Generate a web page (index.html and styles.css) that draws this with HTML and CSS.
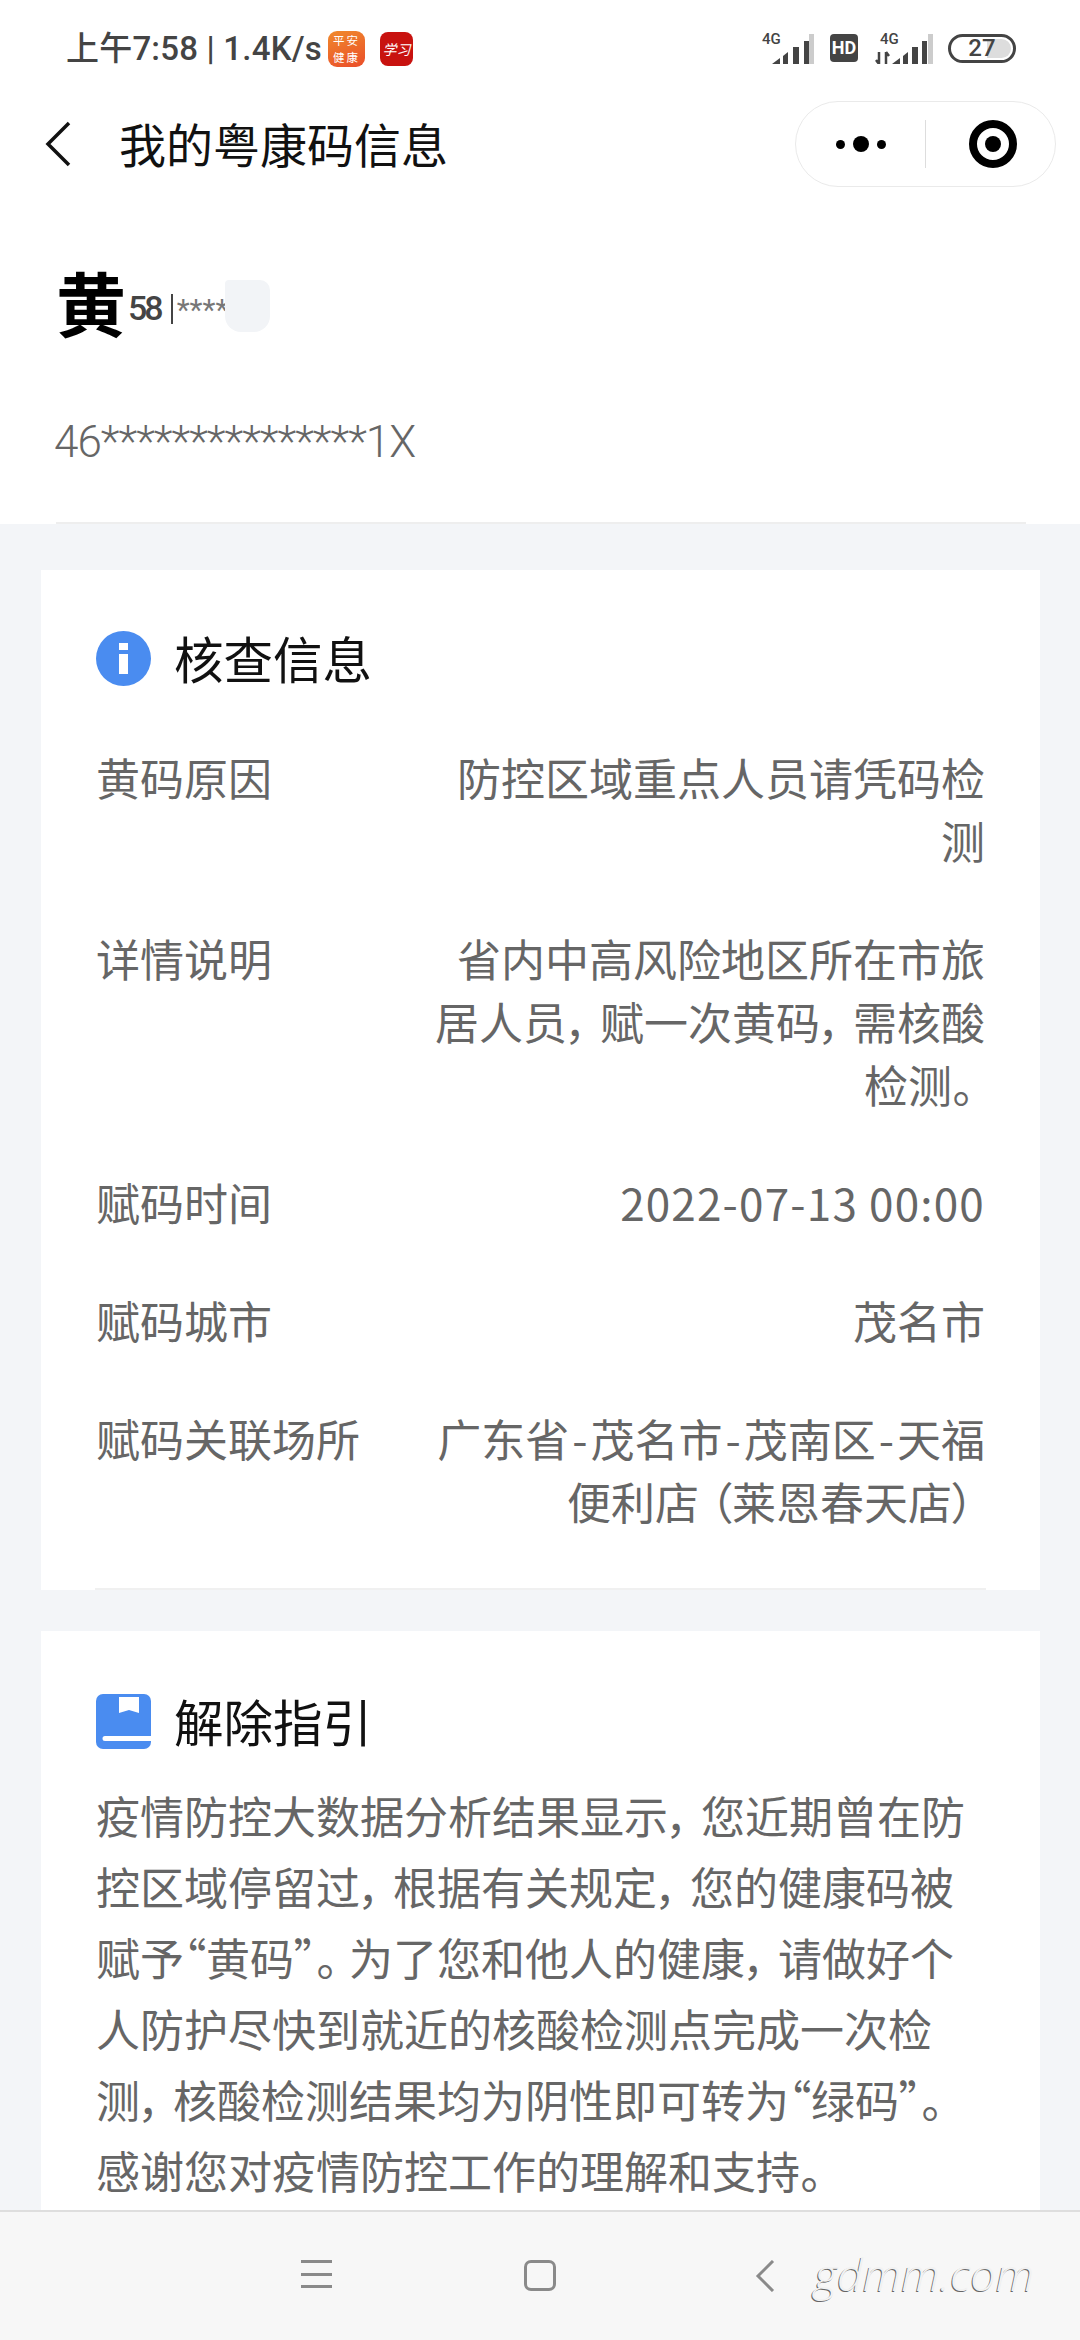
FILE: index.html
```html
<!DOCTYPE html>
<html lang="zh-CN">
<head>
    <meta charset="UTF-8">
    <meta name="viewport" content="width=device-width, initial-scale=1.0">
    <title>我的粤康码信息</title>
    <link rel="stylesheet" href="styles.css">
</head>
<body>
    <div class="status-bar">
        <div class="status-left">
            <span class="status-time">上午7:58 | 1.4K/s</span>
            <span class="app-badge app-badge-orange">平安<br>健康</span>
            <span class="app-badge app-badge-red">学习</span>
        </div>
        <div class="status-right">
            <span class="signal">
                <span class="signal-label">4G</span>
                <svg width="42" height="30" viewBox="0 0 42 30">
                    <path d="M0 30 L8 24 V30 Z M11 22 L16 18 V30 H11 Z M21 13 H27 V30 H21 Z M32 7 H37 V30 H32 Z" fill="#444"/>
                    <rect x="37" y="0" width="5" height="30" fill="#ccc"/>
                </svg>
            </span>
            <span class="hd-badge">HD</span>
            <span class="signal signal-data">
                <span class="signal-label">4G</span>
                <svg width="58" height="30" viewBox="0 0 58 30">
                    <path d="M4 18 V30 M1 26 L4 30 M11 30 V18 M11 18 L14 22" stroke="#444" stroke-width="2.500" fill="none"/>
                    <path d="M17 30 L25 24 V30 Z M28 22 L33 18 V30 H28 Z M37 13 H43 V30 H37 Z M47 7 H52 V30 H47 Z" fill="#444"/>
                    <rect x="53" y="0" width="5" height="30" fill="#ccc"/>
                </svg>
            </span>
            <span class="battery"><span class="battery-level"></span><span class="battery-num">27</span></span>
        </div>
    </div>

    <div class="app-bar">
        <svg class="back-icon" width="26" height="46" viewBox="0 0 26 46">
            <path d="M24 2 L3 23 L24 44" fill="none" stroke="#111" stroke-width="3.500"/>
        </svg>
        <h1>我的粤康码信息</h1>
        <div class="capsule">
            <span class="capsule-dots"><i></i><i class="big"></i><i></i></span>
            <span class="capsule-line"></span>
            <span class="capsule-target"></span>
        </div>
    </div>

    <main class="content">
        <section class="person">
            <div class="person-name">
                <span class="name-first">黄</span>
                <span class="name-digits">58</span>
                <span class="name-bar"></span>
                <span class="name-stars">****</span>
                <span class="name-blot"></span>
            </div>
            <div class="person-id">46***************1X</div>
        </section>

        <section class="card card-check">
            <div class="card-title">
                <svg class="card-icon" viewBox="0 0 55 55">
                    <circle cx="27.500" cy="27.500" r="27.500" fill="#4a8cf0"/>
                    <rect x="23" y="12" width="9" height="7" fill="#fff"/>
                    <rect x="23" y="23" width="9" height="20" fill="#fff"/>
                </svg>
                <h2>核查信息</h2>
            </div>
            <div class="row">
                <div class="row-label">黄码原因</div>
                <div class="row-value">防控区域重点人员请凭码检<br>测</div>
            </div>
            <div class="row">
                <div class="row-label">详情说明</div>
                <div class="row-value">省内中高风险地区所在市旅<br>居人员<span class="punct">，</span>赋一次黄码<span class="punct">，</span>需核酸<br>检测<span class="punct">。</span></div>
            </div>
            <div class="row">
                <div class="row-label">赋码时间</div>
                <div class="row-value row-date">2022-07-13 00:00</div>
            </div>
            <div class="row">
                <div class="row-label">赋码城市</div>
                <div class="row-value">茂名市</div>
            </div>
            <div class="row">
                <div class="row-label">赋码关联场所</div>
                <div class="row-value">广东省<span class="hyphen">-</span>茂名市<span class="hyphen">-</span>茂南区<span class="hyphen">-</span>天福<br>便利店<span class="punct-open">（</span>莱恩春天店<span class="punct">）</span></div>
            </div>
        </section>

        <section class="card card-guide">
            <div class="card-title">
                <svg class="card-icon" viewBox="0 0 55 55">
                    <path d="M7 0 H48 A7 7 0 0 1 55 7 V48 A7 7 0 0 1 48 55 H7 A7 7 0 0 1 0 48 V7 A7 7 0 0 1 7 0 Z" fill="#4a8cf0"/>
                    <path d="M23 3 H43 V19 L33 16 L23 19 Z" fill="#fff"/>
                    <path d="M9 42 H55 V47 H9 A2.500 2.500 0 0 1 9 42 Z" fill="#fff"/>
                </svg>
                <h2>解除指引</h2>
            </div>
            <p class="guide-text">疫情防控大数据分析结果显示<span class="punct">，</span>您近期曾在防<br>控区域停留过<span class="punct">，</span>根据有关规定<span class="punct">，</span>您的健康码被<br>赋予“黄码”<span class="punct">。</span>为了您和他人的健康<span class="punct">，</span>请做好个<br>人防护尽快到就近的核酸检测点完成一次检<br>测<span class="punct">，</span>核酸检测结果均为阴性即可转为“绿码”<span class="punct">。</span><br>感谢您对疫情防控工作的理解和支持<span class="punct">。</span></p>
        </section>
    </main>

    <nav class="nav-bar">
        <span class="nav-menu"><i></i><i></i><i></i></span>
        <span class="nav-home"></span>
        <svg class="nav-back" width="20" height="32" viewBox="0 0 20 32">
            <path d="M18 1 L3 16 L18 31" fill="none" stroke="#8a8a8a" stroke-width="3"/>
        </svg>
        <span class="watermark">gdmm.com</span>
    </nav>
</body>
</html>
```

FILE: styles.css
```css
* {
    box-sizing: border-box;
}
body {
    margin: 0;
    width: 1080px;
    height: 2340px;
    overflow: hidden;
    display: flex;
    flex-direction: column;
    background-color: #fff;
    font-family: "Noto Sans CJK SC", "Noto Sans", sans-serif;
    font-feature-settings: "palt";
}

/* status bar */
.status-bar {
    height: 98px;
    padding: 30px 64px 0 66px;
    display: flex;
    justify-content: space-between;
    align-items: flex-start;
}
.status-left {
    display: flex;
    align-items: center;
    height: 38px;
}
.status-time {
    width: 262px;
    font-size: 33px;
    line-height: 38px;
    letter-spacing: 0.2px;
    font-weight: 500;
    color: #444;
    white-space: nowrap;
    font-family: Roboto, "Noto Sans CJK SC", sans-serif;
}
.app-badge {
    display: flex;
    align-items: center;
    justify-content: center;
    text-align: center;
    color: #fff;
    white-space: nowrap;
}
.app-badge-orange {
    width: 37px;
    height: 36px;
    border-radius: 9px;
    font-size: 11.500px;
    line-height: 17px;
    letter-spacing: 2px;
    background: linear-gradient(160deg, #f08a2c, #ea4d2a);
}
.app-badge-red {
    width: 33px;
    height: 34px;
    margin-left: 15px;
    border-radius: 8px;
    font-size: 14px;
    font-style: italic;
    background-color: #c8120f;
}
.status-right {
    display: flex;
    align-items: flex-start;
    padding-top: 4px;
}
.signal {
    position: relative;
    width: 52px;
    height: 30px;
    display: flex;
    justify-content: flex-end;
}
.signal-data {
    width: 58px;
    margin-left: 17px;
}
.signal-label {
    position: absolute;
    left: 0;
    top: -3px;
    font-size: 15px;
    line-height: 16px;
    font-weight: 500;
    color: #444;
    font-family: Roboto, sans-serif;
}
.signal-data .signal-label {
    left: 5px;
}
.hd-badge {
    width: 28px;
    height: 28px;
    margin-left: 16px;
    border-radius: 4px;
    background-color: #444;
    color: #fff;
    font-size: 18px;
    line-height: 28px;
    font-weight: 700;
    text-align: center;
    font-family: Roboto, sans-serif;
}
.battery {
    position: relative;
    width: 68px;
    height: 29px;
    margin-left: 15px;
    border: 3px solid #444;
    border-radius: 15px;
    text-align: center;
}
.battery-level {
    position: absolute;
    right: 2px;
    top: 2px;
    width: 24px;
    height: 19px;
    border-radius: 0 10px 10px 0;
    background-color: #ddd;
}
.battery-num {
    position: relative;
    font-size: 24px;
    line-height: 23px;
    display: block;
    font-weight: 500;
    color: #444;
    font-family: Roboto, sans-serif;
}

/* app bar */
.app-bar {
    height: 92px;
    padding: 0 24px 0 45px;
    display: flex;
    align-items: center;
    flex-shrink: 0;
}
.back-icon {
    flex-shrink: 0;
}
.app-bar h1 {
    flex: 1;
    margin: -2px 0 0 48px;
    font-size: 47px;
    line-height: 60px;
    font-weight: 400;
    color: #111;
}
.capsule {
    width: 261px;
    height: 86px;
    border: 1px solid #eaeaea;
    border-radius: 43px;
    display: flex;
    align-items: center;
}
.capsule-dots {
    width: 129px;
    display: flex;
    align-items: center;
    justify-content: center;
    gap: 8px;
}
.capsule-dots i {
    width: 9px;
    height: 9px;
    border-radius: 50%;
    background-color: #000;
}
.capsule-dots i.big {
    width: 16px;
    height: 16px;
}
.capsule-line {
    width: 1px;
    height: 48px;
    background-color: #ddd;
}
.capsule-target {
    position: relative;
    width: 48px;
    height: 48px;
    margin-left: 43px;
    border: 8px solid #000;
    border-radius: 50%;
}
.capsule-target::after {
    content: "";
    position: absolute;
    left: 8px;
    top: 8px;
    width: 16px;
    height: 16px;
    border-radius: 50%;
    background-color: #000;
}

/* scrolling content */
.content {
    flex: 1;
    min-height: 0;
    overflow: hidden;
    background-color: #f3f5f8;
}
.person {
    height: 334px;
    padding: 70px 54px 0 56px;
    background-color: #fff;
}
.person-name {
    position: relative;
    height: 84px;
    display: flex;
    align-items: center;
}
.name-first {
    font-size: 70px;
    line-height: 84px;
    font-weight: 700;
    color: #000;
}
.name-digits {
    margin: 12px 0 0 2px;
    font-size: 34px;
    line-height: 40px;
    letter-spacing: -3px;
    font-weight: 500;
    color: #444;
    font-family: Roboto, sans-serif;
}
.name-bar {
    width: 2px;
    height: 30px;
    margin: 14px 0 0 10px;
    background-color: #444;
}
.name-stars {
    margin: 16px 0 0 4px;
    font-size: 30px;
    line-height: 30px;
    color: #777;
    white-space: nowrap;
    font-family: Roboto, sans-serif;
}
.name-blot {
    position: absolute;
    left: 169px;
    top: 20px;
    width: 45px;
    height: 52px;
    border-radius: 4px 10px 16px 16px;
    background-color: #f2f4f7;
}
.person-id {
    margin: 68px 0 0 -2px;
    font-size: 44px;
    line-height: 60px;
    color: #666;
    letter-spacing: -1px;
    font-family: Roboto, sans-serif;
    font-weight: 300;
}
.person::after {
    content: "";
    display: block;
    height: 2px;
    margin-top: 50px;
    background-color: #eeeeee;
}
.card {
    width: 999px;
    margin-left: 41px;
    padding: 0 55px;
    background-color: #fff;
}
.card-check {
    height: 1020px;
    margin-top: 46px;
    padding-top: 60px;
    border-bottom: 2px solid #f0f0f0;
    border-image: linear-gradient(to right, #fff 55px, #f0f0f0 55px, #f0f0f0 944px, #fff 944px) 1;
}
.card-guide {
    height: 600px;
    margin-top: 41px;
    padding-top: 62px;
}
.card-title {
    height: 56px;
    display: flex;
    align-items: center;
    margin-bottom: 31px;
}
.card-check .card-title {
    margin-bottom: 60px;
}
.card-icon {
    width: 55px;
    height: 55px;
    flex-shrink: 0;
}
.card-title h2 {
    margin: -1px 0 0 23px;
    font-size: 49.500px;
    line-height: 56px;
    font-weight: 400;
    color: #111;
}
.row {
    display: flex;
    justify-content: space-between;
    margin-bottom: 55px;
    font-size: 44px;
    line-height: 63px;
    color: #666;
}
.row-label {
    white-space: nowrap;
}
.row-value {
    text-align: right;
    white-space: nowrap;
}
.row-date {
    letter-spacing: 1.200px;
}
.guide-text {
    margin: 0;
    font-size: 44px;
    line-height: 71px;
    color: #666;
    white-space: nowrap;
}
.punct {
    margin-right: 11px;
}
.punct-open {
    margin-left: 11px;
}
.hyphen {
    margin: 0 3px;
}

/* bottom nav */
.nav-bar {
    position: relative;
    height: 130px;
    flex-shrink: 0;
    border-top: 2px solid #dedede;
    background-color: #f7f7f7;
    display: flex;
    align-items: flex-start;
    padding: 48px 0 0 301px;
}
.nav-menu {
    width: 31px;
    height: 28px;
    display: flex;
    flex-direction: column;
    justify-content: space-between;
}
.nav-menu i {
    height: 3px;
    background-color: #8a8a8a;
}
.nav-home {
    width: 32px;
    height: 31px;
    margin-left: 192px;
    border: 3px solid #8a8a8a;
    border-radius: 7px;
}
.nav-back {
    margin-left: 199px;
}
.watermark {
    position: absolute;
    left: 814px;
    top: 32px;
    font-size: 45px;
    line-height: 60px;
    font-style: italic;
    font-weight: 300;
    color: #f2f2f2;
    text-shadow: -1px 1px 0 #666;
    font-family: "Open Sans", sans-serif;
}
```
